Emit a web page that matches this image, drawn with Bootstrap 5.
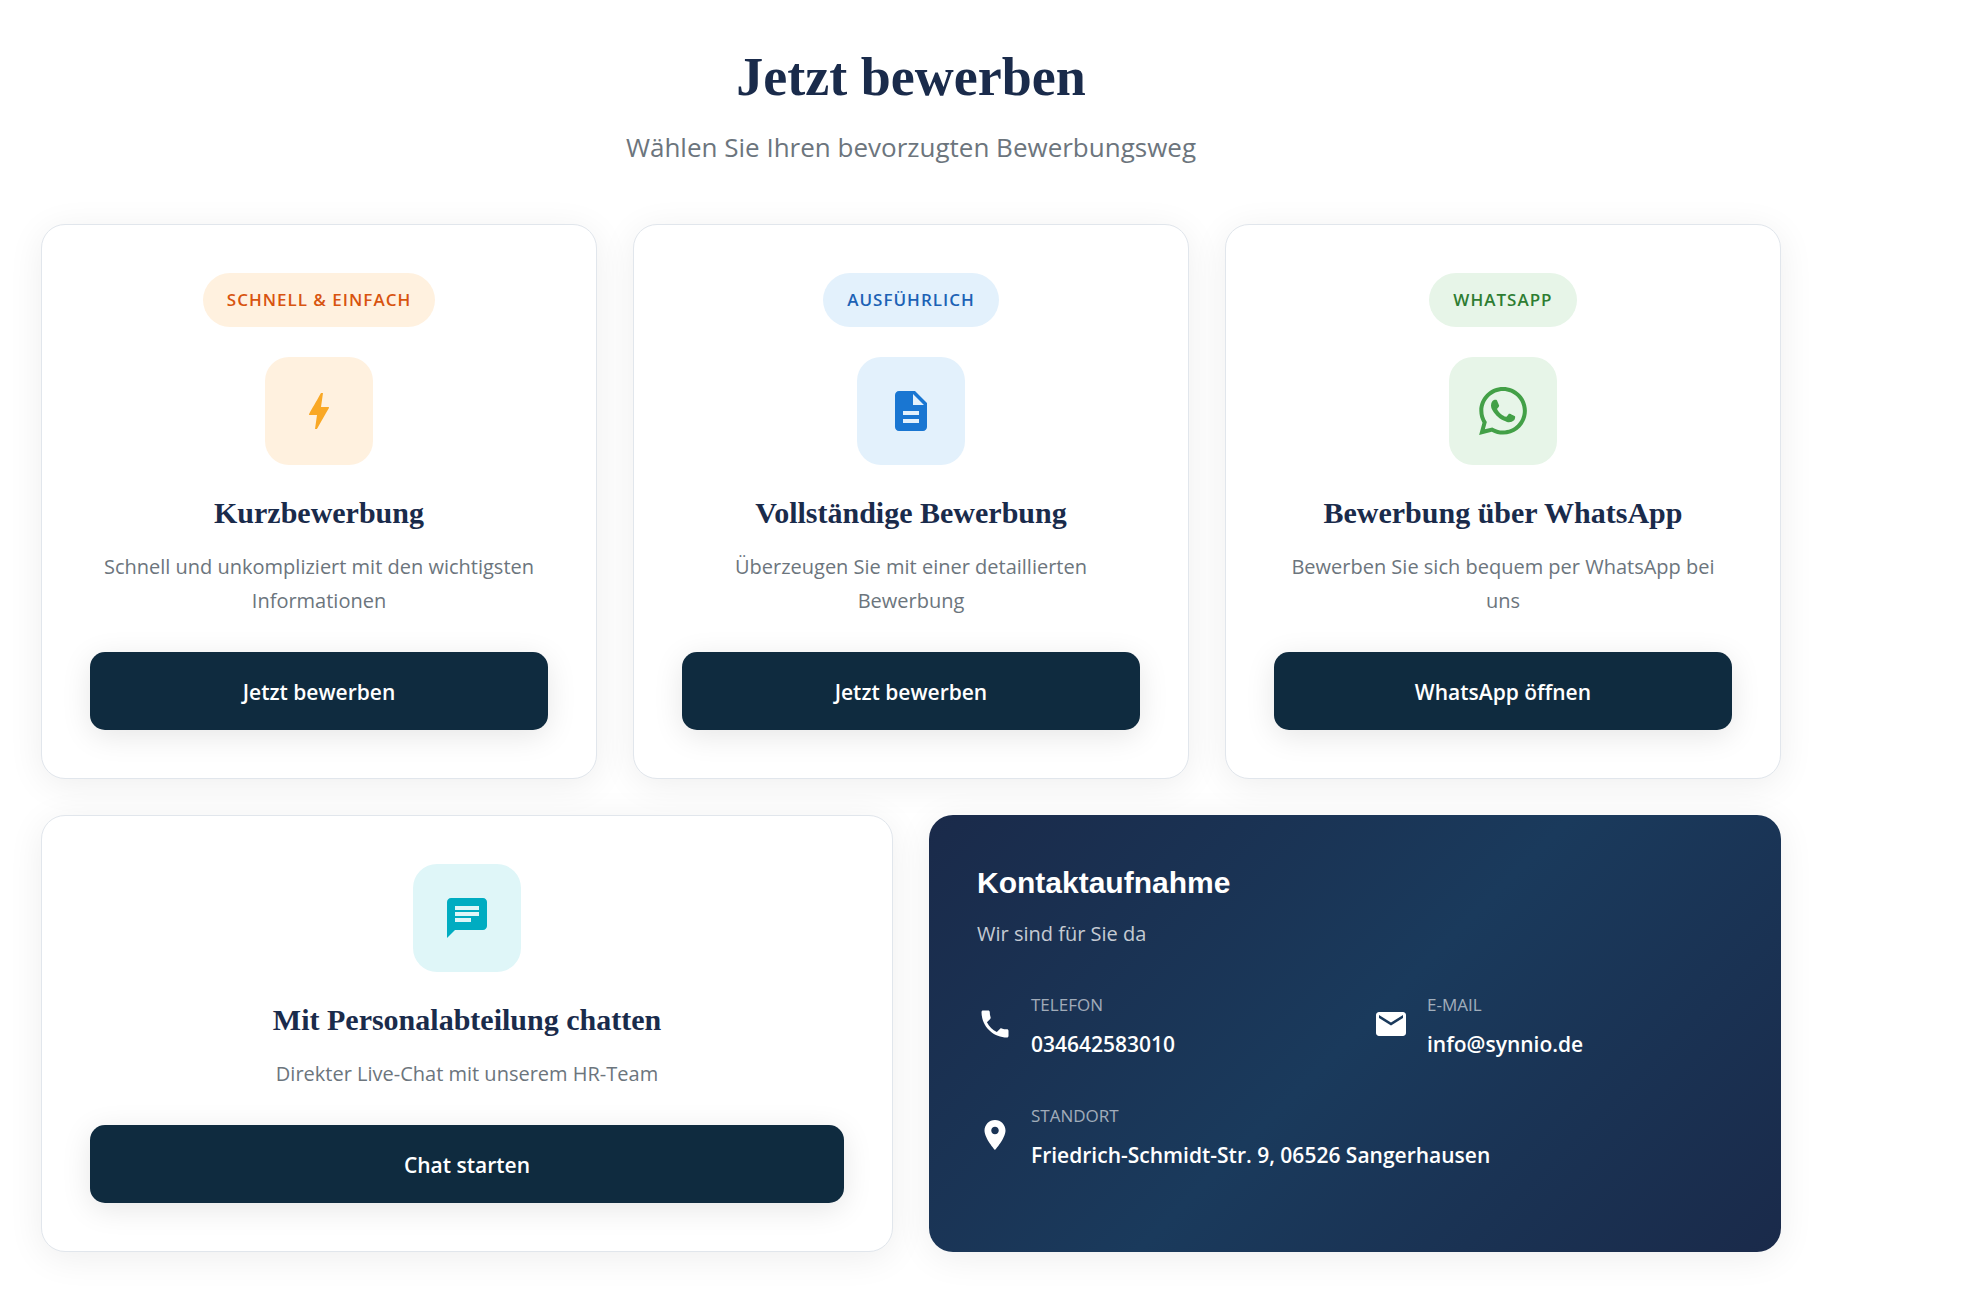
<!DOCTYPE html>
<html lang="de">
<head>
<meta charset="utf-8">
<meta name="viewport" content="width=device-width, initial-scale=1">
<title>Jetzt bewerben</title>
<link href="https://cdn.jsdelivr.net/npm/bootstrap@5.3.0/dist/css/bootstrap.min.css" rel="stylesheet">
<style>
  :root { --navy: #1a2b4b; --ink: #0f2b3f; --soft: #6c757d; }
  body { font-family: "Open Sans", "Noto Sans", sans-serif; background: #fff; color: var(--navy); }
  .apply-section { max-width: 1822px; padding: 45px 41px 46px; }
  .apply-grid { --bs-gutter-x: 36px; --bs-gutter-y: 36px; }
  .serif-head { font-family: "Liberation Serif", serif; font-weight: 700; line-height: 1.2; color: var(--navy); }
  .page-head { font-size: 54px; margin-bottom: 16px; }
  .page-sub { font-size: 26px; line-height: 42px; margin-bottom: 56px; color: var(--soft); }
  .option-card { border: 1px solid #e1e6ec; border-radius: 24px; padding: 48px; box-shadow: 0 6px 36px rgba(0,0,0,.07); text-align: center; }
  .option-card .serif-head { font-size: 30px; margin-bottom: 19px; }
  .option-text { font-size: 20px; line-height: 34px; margin-bottom: 34px; color: var(--soft); }
  .option-tag { font-size: 17px; font-weight: 600; line-height: 30px; padding: 12px 24px; border-radius: 30px; letter-spacing: 1px; margin-bottom: 30px; text-transform: uppercase; }
  .option-icon { width: 108px; height: 108px; border-radius: 24px; margin-bottom: 30px; }
  .option-icon svg { width: 48px; height: 48px; fill: currentColor; }
  .tone-orange { background: #fff1df; }
  .tone-blue { background: #e3f1fc; }
  .tone-green { background: #e7f5e8; }
  .tone-cyan { background: #dff6f8; color: #00acc1; }
  .option-tag.tone-orange { color: #d8540f; }
  .option-tag.tone-blue { color: #1c62b5; }
  .option-tag.tone-green { color: #2e7d32; }
  .option-icon.tone-orange { color: #f9a825; }
  .option-icon.tone-blue { color: #1976d2; }
  .option-icon.tone-green { color: #43a047; }
  .btn-apply { --bs-btn-color: #fff; --bs-btn-bg: var(--ink); --bs-btn-hover-color: #fff; --bs-btn-hover-bg: #1a3a5c; --bs-btn-active-color: #fff; --bs-btn-active-bg: #1a3a5c;
    border: 0; border-radius: 15px; padding: 22px 24px 20px; font-size: 21px; font-weight: 600; line-height: 36px; box-shadow: 0 6px 30px rgba(0,0,0,.1); }
  .contact-card { border: 0; border-radius: 24px; padding: 48px; color: #fff; background: linear-gradient(135deg, #1a2a4a 0%, #1a3a5c 50%, #1a2a4a 100%); box-shadow: 0 6px 36px rgba(0,0,0,.07); }
  .contact-head { font-family: "Liberation Sans", sans-serif; font-size: 30px; font-weight: 700; line-height: 39px; margin-bottom: 15px; }
  .contact-sub { font-size: 20px; line-height: 34px; margin-bottom: 36px; color: rgba(255,255,255,.75); }
  .contact-item { gap: 18px; }
  .contact-item svg { width: 36px; height: 36px; fill: #fff; flex: none; }
  .contact-label { font-size: 17px; line-height: 36px; margin-bottom: 3px; color: rgba(255,255,255,.6); text-transform: uppercase; }
  .contact-value { font-size: 21px; font-weight: 600; line-height: 36px; color: #fff; }
</style>
</head>
<body>
<main class="container-fluid apply-section ms-0">
  <header class="text-center">
    <h1 class="serif-head page-head">Jetzt bewerben</h1>
    <p class="page-sub">Wählen Sie Ihren bevorzugten Bewerbungsweg</p>
  </header>

  <div class="row apply-grid">
    <div class="col-12 col-lg-4">
      <div class="card option-card align-items-center h-100">
        <span class="option-tag tone-orange">Schnell &amp; Einfach</span>
        <div class="option-icon tone-orange d-flex align-items-center justify-content-center">
          <svg viewBox="0 0 24 24" aria-hidden="true"><path d="M11 21h-1l1-7H7.5c-.58 0-.57-.32-.38-.66.19-.34.05-.08.07-.12C8.48 10.94 10.42 7.54 13 3h1l-1 7h3.5c.49 0 .56.33.47.51l-.07.15C12.96 17.55 11 21 11 21z"/></svg>
        </div>
        <h2 class="serif-head">Kurzbewerbung</h2>
        <p class="option-text">Schnell und unkompliziert mit den wichtigsten Informationen</p>
        <button type="button" class="btn btn-apply w-100 mt-auto">Jetzt bewerben</button>
      </div>
    </div>
    <div class="col-12 col-lg-4">
      <div class="card option-card align-items-center h-100">
        <span class="option-tag tone-blue">Ausführlich</span>
        <div class="option-icon tone-blue d-flex align-items-center justify-content-center">
          <svg viewBox="0 0 24 24" aria-hidden="true"><path d="M14 2H6c-1.1 0-1.99.9-1.99 2L4 20c0 1.1.89 2 1.99 2H18c1.1 0 2-.9 2-2V8l-6-6zm2 16H8v-2h8v2zm0-4H8v-2h8v2zm-3-5V3.500L18.500 9H13z"/></svg>
        </div>
        <h2 class="serif-head">Vollständige Bewerbung</h2>
        <p class="option-text">Überzeugen Sie mit einer detaillierten Bewerbung</p>
        <button type="button" class="btn btn-apply w-100 mt-auto">Jetzt bewerben</button>
      </div>
    </div>
    <div class="col-12 col-lg-4">
      <div class="card option-card align-items-center h-100">
        <span class="option-tag tone-green">WhatsApp</span>
        <div class="option-icon tone-green d-flex align-items-center justify-content-center">
          <svg viewBox="0 0 24 24" aria-hidden="true"><path d="M.057 24l1.687-6.163c-1.041-1.804-1.588-3.849-1.587-5.946.003-6.556 5.338-11.891 11.893-11.891 3.181.001 6.167 1.24 8.413 3.488 2.245 2.248 3.481 5.236 3.48 8.414-.003 6.557-5.338 11.892-11.893 11.892-1.99-.001-3.951-.5-5.688-1.448l-6.305 1.654zm6.597-3.807c1.676.995 3.276 1.591 5.392 1.592 5.448 0 9.886-4.434 9.889-9.885.002-5.462-4.415-9.89-9.881-9.892-5.452 0-9.887 4.434-9.889 9.884-.001 2.225.651 3.891 1.746 5.634l-.999 3.648 3.742-.981zm11.387-5.464c-.074-.124-.272-.198-.57-.347-.297-.149-1.758-.868-2.031-.967-.272-.099-.47-.149-.669.149-.198.297-.768.967-.941 1.165-.173.198-.347.223-.644.074-.297-.149-1.255-.462-2.39-1.475-.883-.788-1.48-1.761-1.653-2.059-.173-.297-.018-.458.13-.606.134-.133.297-.347.446-.521.151-.172.2-.296.3-.495.099-.198.05-.372-.025-.521-.075-.148-.669-1.611-.916-2.206-.242-.579-.487-.501-.669-.51l-.57-.01c-.198 0-.52.074-.792.372s-1.04 1.016-1.04 2.479 1.065 2.876 1.213 3.074c.149.198 2.095 3.2 5.076 4.487.709.306 1.263.489 1.694.626.712.226 1.36.194 1.872.118.571-.085 1.758-.719 2.006-1.413.248-.695.248-1.29.173-1.414z"/></svg>
        </div>
        <h2 class="serif-head">Bewerbung über WhatsApp</h2>
        <p class="option-text">Bewerben Sie sich bequem per WhatsApp bei uns</p>
        <button type="button" class="btn btn-apply w-100 mt-auto">WhatsApp öffnen</button>
      </div>
    </div>

    <div class="col-12 col-lg-6">
      <div class="card option-card align-items-center h-100">
        <div class="option-icon tone-cyan d-flex align-items-center justify-content-center">
          <svg viewBox="0 0 24 24" aria-hidden="true"><path d="M20 2H4c-1.1 0-1.99.9-1.99 2L2 22l4-4h14c1.1 0 2-.9 2-2V4c0-1.1-.9-2-2-2zM6 9h12v2H6V9zm8 5H6v-2h8v2zm4-6H6V6h12v2z"/></svg>
        </div>
        <h2 class="serif-head">Mit Personalabteilung chatten</h2>
        <p class="option-text">Direkter Live-Chat mit unserem HR-Team</p>
        <button type="button" class="btn btn-apply w-100 mt-auto">Chat starten</button>
      </div>
    </div>
    <div class="col-12 col-lg-6">
      <div class="card contact-card h-100">
        <h2 class="contact-head">Kontaktaufnahme</h2>
        <p class="contact-sub">Wir sind für Sie da</p>
        <div class="row apply-grid">
          <div class="col-12 col-md-6">
            <div class="contact-item d-flex align-items-center">
              <svg viewBox="0 0 24 24" aria-hidden="true"><path d="M6.620 10.790c1.440 2.830 3.760 5.140 6.590 6.590l2.200-2.200c.27-.27.67-.36 1.020-.24 1.120.37 2.330.57 3.570.57.55 0 1 .45 1 1V20c0 .55-.45 1-1 1-9.390 0-17-7.610-17-17 0-.55.45-1 1-1h3.500c.55 0 1 .45 1 1 0 1.250.2 2.450.57 3.570.11.35.03.74-.25 1.020l-2.200 2.200z"/></svg>
              <div>
                <div class="contact-label">Telefon</div>
                <a class="contact-value d-block text-decoration-none" href="tel:034642583010">034642583010</a>
              </div>
            </div>
          </div>
          <div class="col-12 col-md-6">
            <div class="contact-item d-flex align-items-center">
              <svg viewBox="0 0 24 24" aria-hidden="true"><path d="M20 4H4c-1.100 0-1.990.9-1.990 2L2 18c0 1.100.9 2 2 2h16c1.100 0 2-.9 2-2V6c0-1.100-.9-2-2-2zm0 4l-8 5-8-5V6l8 5 8-5v2z"/></svg>
              <div>
                <div class="contact-label">E-Mail</div>
                <a class="contact-value d-block text-decoration-none" href="mailto:info@synnio.de">info@synnio.de</a>
              </div>
            </div>
          </div>
          <div class="col-12">
            <div class="contact-item d-flex align-items-center">
              <svg viewBox="0 0 24 24" aria-hidden="true"><path d="M12 2C8.130 2 5 5.130 5 9c0 5.250 7 13 7 13s7-7.750 7-13c0-3.870-3.130-7-7-7zm0 9.500c-1.380 0-2.500-1.120-2.500-2.500s1.120-2.500 2.500-2.500 2.500 1.120 2.500 2.500-1.120 2.500-2.500 2.500z"/></svg>
              <div>
                <div class="contact-label">Standort</div>
                <div class="contact-value">Friedrich-Schmidt-Str. 9, 06526 Sangerhausen</div>
              </div>
            </div>
          </div>
        </div>
      </div>
    </div>
  </div>
</main>
<script src="https://cdn.jsdelivr.net/npm/bootstrap@5.3.0/dist/js/bootstrap.bundle.min.js"></script>
</body>
</html>
